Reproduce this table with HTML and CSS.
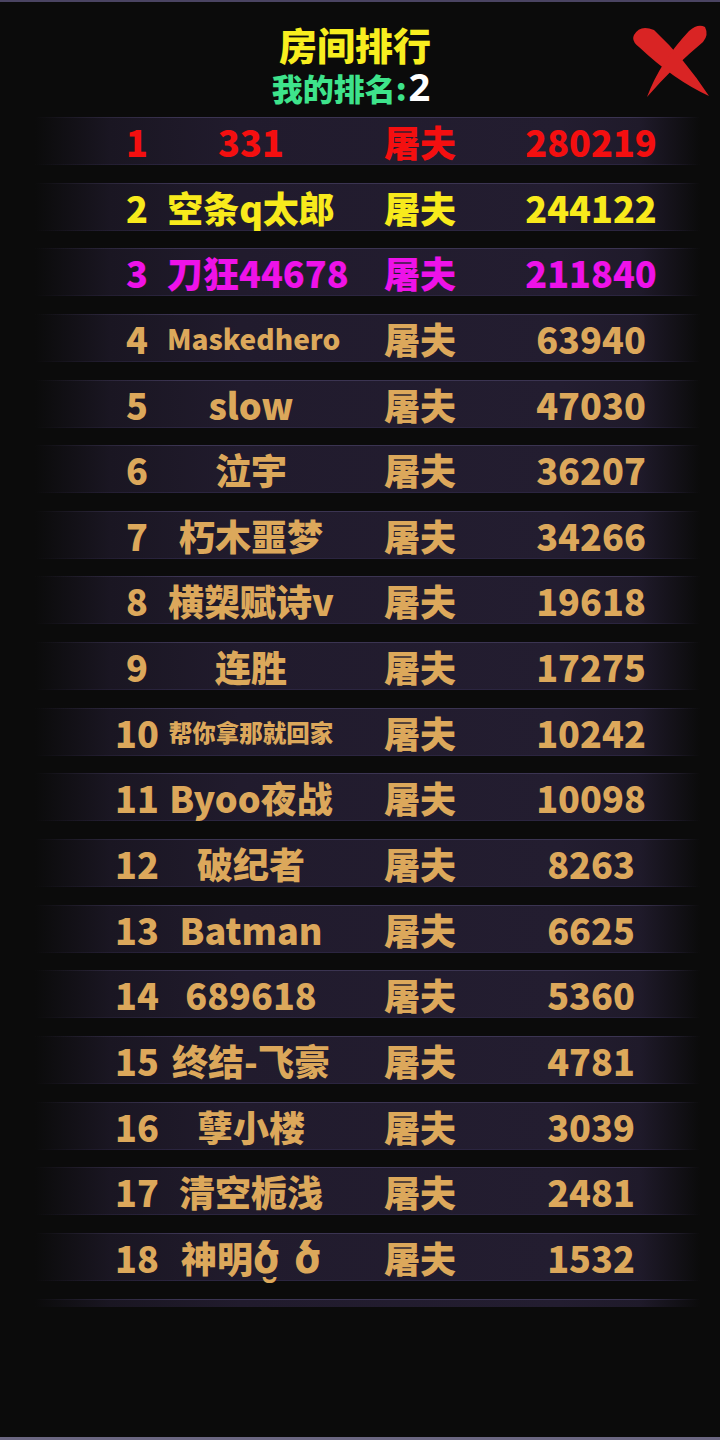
FILE: index.html
```html
<!DOCTYPE html>
<html lang="zh">
<head>
    <meta charset="UTF-8">
    <meta name="viewport" content="width=device-width, initial-scale=1.0">
    <title>房间排行</title>
    <link rel="stylesheet" href="styles.css">
</head>
<body>
    <div class="screen">
        <div class="header">
            <h1 class="title">房间排行</h1>
            <p class="my-rank">我的排名:<span class="my-rank-num">2</span></p>
            <button class="close-btn" type="button" aria-label="关闭">
                <svg viewBox="0 0 80 80" width="80" height="80">
                    <path d="M2,13 Q8,2 22,8 Q52,36 77,74 Q42,58 7,25 Q-1,19 2,13 Z" fill="#d92424"/>
                    <path d="M73,5 Q77,13 71,20 Q42,44 15,75 Q28,40 57,9 Q66,1 73,5 Z" fill="#d92424"/>
                </svg>
            </button>
        </div>

        <div class="board">
            <div class="row first">
                <span class="rank">1</span><span class="name">331</span><span class="job">屠夫</span><span class="score">280219</span>
            </div>
            <div class="row second">
                <span class="rank">2</span><span class="name">空条q太郎</span><span class="job">屠夫</span><span class="score">244122</span>
            </div>
            <div class="row third">
                <span class="rank">3</span><span class="name">刀狂44678</span><span class="job">屠夫</span><span class="score">211840</span>
            </div>
            <div class="row">
                <span class="rank">4</span><span class="name fit-latin">Maskedhero</span><span class="job">屠夫</span><span class="score">63940</span>
            </div>
            <div class="row">
                <span class="rank">5</span><span class="name">slow</span><span class="job">屠夫</span><span class="score">47030</span>
            </div>
            <div class="row">
                <span class="rank">6</span><span class="name">泣宇</span><span class="job">屠夫</span><span class="score">36207</span>
            </div>
            <div class="row">
                <span class="rank">7</span><span class="name">朽木噩梦</span><span class="job">屠夫</span><span class="score">34266</span>
            </div>
            <div class="row">
                <span class="rank">8</span><span class="name">横槊赋诗v</span><span class="job">屠夫</span><span class="score">19618</span>
            </div>
            <div class="row">
                <span class="rank">9</span><span class="name">连胜</span><span class="job">屠夫</span><span class="score">17275</span>
            </div>
            <div class="row">
                <span class="rank">10</span><span class="name fit-cjk">帮你拿那就回家</span><span class="job">屠夫</span><span class="score">10242</span>
            </div>
            <div class="row">
                <span class="rank">11</span><span class="name">Byoo夜战</span><span class="job">屠夫</span><span class="score">10098</span>
            </div>
            <div class="row">
                <span class="rank">12</span><span class="name">破纪者</span><span class="job">屠夫</span><span class="score">8263</span>
            </div>
            <div class="row">
                <span class="rank">13</span><span class="name">Batman</span><span class="job">屠夫</span><span class="score">6625</span>
            </div>
            <div class="row">
                <span class="rank">14</span><span class="name">689618</span><span class="job">屠夫</span><span class="score">5360</span>
            </div>
            <div class="row">
                <span class="rank">15</span><span class="name">终结-飞豪</span><span class="job">屠夫</span><span class="score">4781</span>
            </div>
            <div class="row">
                <span class="rank">16</span><span class="name">孽小楼</span><span class="job">屠夫</span><span class="score">3039</span>
            </div>
            <div class="row">
                <span class="rank">17</span><span class="name">清空栀浅</span><span class="job">屠夫</span><span class="score">2481</span>
            </div>
            <div class="row">
                <span class="rank">18</span><span class="name">神明<span class="glyph">ծ̮ ծ</span></span><span class="job">屠夫</span><span class="score">1532</span>
            </div>
            <div class="row">
                <span class="rank">19</span><span class="name">路人</span><span class="job">屠夫</span><span class="score">1204</span>
            </div>
        </div>
    </div>
</body>
</html>
```

FILE: styles.css
```css
html, body {
    margin: 0;
    padding: 0;
    background: #0b0b0b;
}
body {
    font-family: "Noto Sans CJK SC", "Noto Sans", sans-serif;
    font-weight: 900;
    color: #dca85b;
}
.screen {
    box-sizing: border-box;
    width: 720px;
    height: 1440px;
    border-top: 2px solid #4a4462;
    border-bottom: 3px solid #6b6782;
    overflow: hidden;
}
.header {
    position: relative;
    height: 115px;
    display: flex;
    flex-direction: column;
    align-items: center;
    padding-right: 10px;
    box-sizing: border-box;
}
.title {
    margin: 20px 0 0 0;
    font-size: 38px;
    line-height: 44px;
    font-weight: 900;
    color: #f7ee1f;
}
.my-rank {
    margin: 0;
    padding-right: 8px;
    font-size: 31px;
    line-height: 40px;
    color: #3ee38b;
}
.my-rank-num {
    font-family: "Noto Sans", sans-serif;
    font-weight: 700;
    font-size: 38px;
    color: #ffffff;
    margin-left: 2px;
}
.close-btn {
    position: absolute;
    top: 20px;
    right: 8px;
    width: 80px;
    height: 80px;
    padding: 0;
    border: none;
    background: none;
    cursor: pointer;
}
.close-btn svg {
    display: block;
}

.board {
    height: 1190px;
    overflow: hidden;
    display: flex;
    flex-direction: column;
    gap: 17.65px;
}
.row {
    flex: none;
    box-sizing: border-box;
    height: 48px;
    display: grid;
    grid-template-columns: 60px 168px 170px 172px;
    align-items: center;
    padding-left: 107px;
    font-size: 36px;
    line-height: 48px;
    white-space: nowrap;
    background:
        linear-gradient(to right, rgba(70, 62, 98, 0) 35px, #3b3452 180px, #3b3452 630px, rgba(70, 62, 98, 0) 700px) top / 100% 1px no-repeat,
        linear-gradient(to right, rgba(50, 44, 68, 0) 35px, #2b2540 180px, #2b2540 630px, rgba(50, 44, 68, 0) 700px) bottom / 100% 1px no-repeat,
        linear-gradient(to right, rgba(34, 27, 46, 0) 35px, #1a1622 110px, #211b2d 240px, #231d30 560px, #1f1a2a 640px, rgba(34, 27, 46, 0) 700px);
}
.row > span {
    text-align: center;
}
.rank {
    font-size: 36px;
}
.name.fit-latin {
    font-size: 28px;
}
.name.fit-cjk {
    font-size: 23.5px;
}
.glyph {
    font-family: "DejaVu Sans", sans-serif;
    font-weight: 700;
    font-size: 42px;
    line-height: 40px;
}
.first {
    color: #f40f10;
}
.second {
    color: #f8ea1c;
}
.third {
    color: #ee12e8;
}
```
